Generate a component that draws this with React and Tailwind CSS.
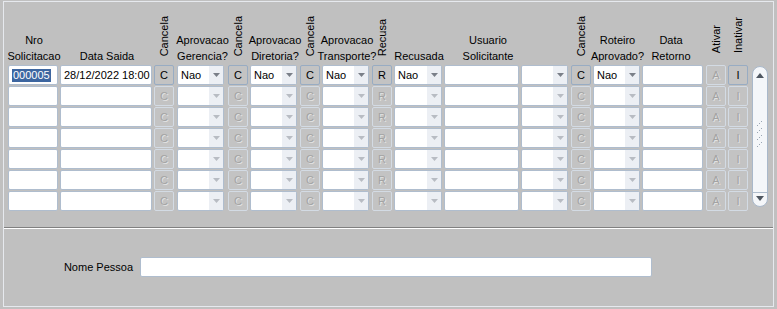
const cols = [
  { kind: "input", w: "w-[50px]", header: ["Nro", "Solicitacao"] },
  { kind: "input", w: "w-[92px]", header: ["Data Saida"] },
  { kind: "btn", label: "C", vertical: "Cancela" },
  { kind: "select", w: "w-[47px]", header: ["Aprovacao", "Gerencia?"] },
  { kind: "btn", label: "C", vertical: "Cancela" },
  { kind: "select", w: "w-[47px]", header: ["Aprovacao", "Diretoria?"] },
  { kind: "btn", label: "C", vertical: "Cancela" },
  { kind: "select", w: "w-[47px]", header: ["Aprovacao", "Transporte?"] },
  { kind: "btn", label: "R", vertical: "Recusa" },
  { kind: "select", w: "w-[48px]", header: ["Recusada"] },
  { kind: "input", w: "w-[75px]", header: ["Usuario", "Solicitante"], shift: "pl-[11px]" },
  { kind: "select", w: "w-[47px]", header: [] },
  { kind: "btn", label: "C", vertical: "Cancela" },
  { kind: "select", w: "w-[47px]", header: ["Roteiro", "Aprovado?"] },
  { kind: "input", w: "w-[61px]", header: ["Data", "Retorno"], shift: "pr-[6px]" },
  { kind: "btn", label: "A", vertical: "Ativar", low: true },
  { kind: "btn", label: "I", vertical: "Inativar", low: true },
];

// first row holds the current record, the rest are empty
const firstRow = [
  { value: "000005", selected: true },
  { value: "28/12/2022 18:00" },
  { on: true },
  { value: "Nao", on: true },
  { on: true },
  { value: "Nao", on: true },
  { on: true },
  { value: "Nao", on: true },
  { on: true },
  { value: "Nao", on: true },
  { value: "" },
  { value: "", on: true },
  { on: true },
  { value: "Nao", on: true },
  { value: "" },
  { on: false },
  { on: true },
];

function Arrow({ on }) {
  return (
    <svg width="7" height="4" viewBox="0 0 7 4">
      <polygon points="0,0 7,0 3.5,4" fill={on ? "#7a7f88" : "#b8bcc3"} />
    </svg>
  );
}

function Cell({ col, data }) {
  if (col.kind === "btn") {
    return (
      <div
        className={`w-[20px] h-[20px] rounded-[2px] border flex items-center justify-center text-[11px] bg-[#c3c3c3] ${
          data.on
            ? "border-[#98acc3] text-black"
            : "border-[#d3dbe4] text-[#a3a3a3] [text-shadow:1px_1px_0_#e2e2e2]"
        }`}
      >
        {col.label}
      </div>
    );
  }
  if (col.kind === "select") {
    return (
      <div className={`${col.w} h-[20px] bg-white border border-[#afbdce] rounded-[2px] flex overflow-hidden`}>
        <div className="flex-1 pl-[3px] text-[11px] leading-[18px] text-black">{data.value}</div>
        <div className="w-[14px] bg-[#eceff4] flex items-center justify-center">
          <Arrow on={data.on} />
        </div>
      </div>
    );
  }
  return (
    <div className={`${col.w} h-[20px] bg-white border border-[#afbdce] rounded-[2px] flex items-center pl-[3px] text-[11px] text-black whitespace-nowrap overflow-hidden`}>
      {data.selected ? (
        <span className="bg-[#3d66a0] text-white px-[1px] leading-[13px]">{data.value}</span>
      ) : (
        <span>{data.value}</span>
      )}
    </div>
  );
}

function Header({ col }) {
  if (col.vertical) {
    return (
      <div className={`w-[20px] flex items-end justify-center ${col.low ? "pb-[11px]" : "pb-[8px]"}`}>
        <span className="[writing-mode:vertical-rl] rotate-180 leading-[12px] text-[11px] text-black">
          {col.vertical}
        </span>
      </div>
    );
  }
  return (
    <div className={`flex flex-col items-center justify-end text-[11px] leading-[16px] text-black whitespace-nowrap ${col.shift || ""}`}>
      {col.header.map((line) => (
        <span key={line}>{line}</span>
      ))}
    </div>
  );
}

function ScrollBar() {
  return (
    <div className="row-span-7 mt-px mb-[4px] w-[16px] rounded-[8px] border border-[#a9b8ca] bg-[#f4f6f9] flex flex-col items-center justify-between overflow-hidden">
      <div className="pt-[6px]">
        <svg width="8" height="5" viewBox="0 0 8 5">
          <polygon points="0,5 8,5 4,0" fill="#4f5761" />
        </svg>
      </div>
      <svg width="8" height="28" viewBox="0 0 8 28">
        {[0, 7, 14, 21].map((y) => (
          <g key={y} fill="#9aa6b4">
            <rect x="5" y={y} width="1" height="1" />
            <rect x="3" y={y + 2} width="1" height="1" />
            <rect x="1" y={y + 4} width="1" height="1" />
          </g>
        ))}
      </svg>
      <div className="w-full border-t border-[#aebccc] pt-[3px] pb-[5px] flex justify-center">
        <svg width="8" height="5" viewBox="0 0 8 5">
          <polygon points="0,0 8,0 4,5" fill="#4f5761" />
        </svg>
      </div>
    </div>
  );
}

export default function App() {
  const emptyRow = cols.map(() => ({ value: "", on: false }));
  const rows = [firstRow, ...Array.from({ length: 6 }, () => emptyRow)];

  return (
    <div className="w-[777px] h-[309px] bg-[#c0c0c0] pt-px pl-[3px] font-['Liberation_Sans',Arial,sans-serif]">
      <div className="w-[771px] h-[306px] border border-[#e6e9ee] flex flex-col">
        <div className="pl-[4px] grid grid-cols-[52px_94px_23px_51px_22px_50px_22px_50px_22px_50px_77px_50px_22px_49px_64px_22px_24px_16px] grid-rows-[62px_repeat(7,20px)] gap-y-px">
          {cols.map((col, i) => (
            <Header key={`h${i}`} col={col} />
          ))}
          <div />
          {rows.map((row, r) => (
            <>
              {cols.map((col, i) => (
                <Cell key={`${r}-${i}`} col={col} data={row[i]} />
              ))}
              {r === 0 && <ScrollBar />}
            </>
          ))}
        </div>

        <div className="mt-[16px] h-px bg-[#808080]" />
        <div className="h-px bg-white" />

        <div className="mt-[28px] flex items-center">
          <div className="w-[129px] text-right text-[11px] text-black">Nome Pessoa</div>
          <div className="ml-[7px] w-[512px] h-[20px] bg-white border border-[#afbdce] rounded-[2px]" />
        </div>
      </div>
    </div>
  );
}
